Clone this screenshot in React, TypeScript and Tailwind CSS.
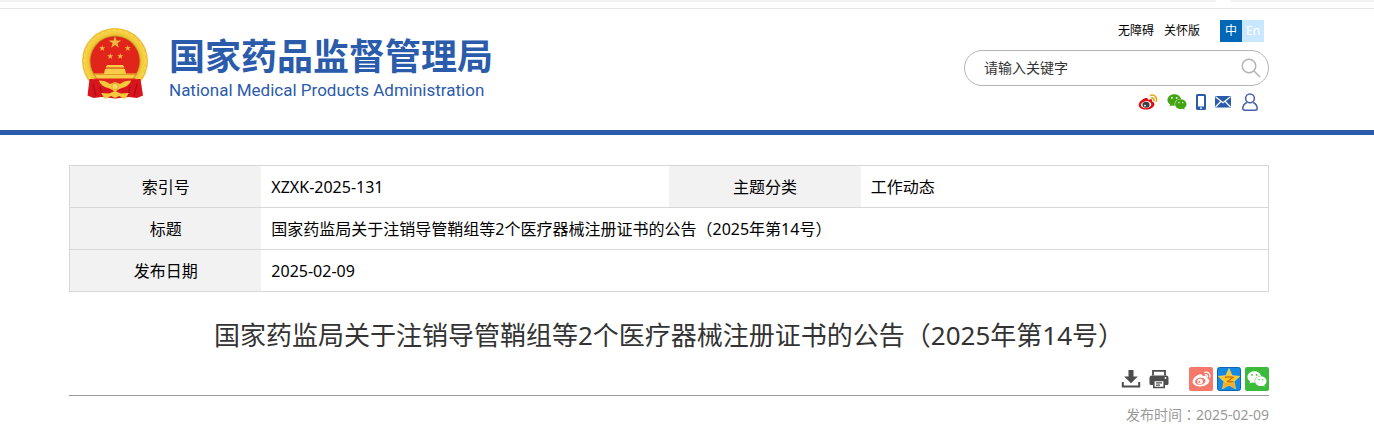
import { useState } from 'react';
import { FaWeixin } from 'react-icons/fa';

type Lang = 'zh' | 'en';

const TITLE = '国家药监局关于注销导管鞘组等2个医疗器械注册证书的公告（2025年第14号）';

const WEIBO_BODY =
    'M8.2 4.3c-2.2.2-5 2.2-6.6 4.5C-1.2 12.9 2.2 16.4 8 16.5c4.900 0 9.300-2.700 9.300-5.700 0-1.700-1.300-2.600-2.700-2.900.6-1.500.3-3.200-4.300-1.600.5-1.500-.3-2.200-2.100-2z';

const Emblem = () => (
    <svg viewBox="0 0 68 72" className="h-[72px] w-[68px] shrink-0" aria-hidden="true">
        <defs>
            <radialGradient id="gold" gradientUnits="userSpaceOnUse" cx="34" cy="33" r="33">
                <stop offset="74%" stopColor="#b98a1c" />
                <stop offset="79%" stopColor="#efc235" />
                <stop offset="90%" stopColor="#f7d345" />
                <stop offset="100%" stopColor="#eab92c" />
            </radialGradient>
            <symbol id="star" viewBox="-10 -10 20 20">
                <path d="M0-10 2.300-3.100H9.500L3.700 1.200 5.900 8.100 0 3.900-5.900 8.100-3.700 1.200-9.500-3.100H-2.300z" fill="#f0b840" />
            </symbol>
        </defs>
        <circle cx="34" cy="33" r="33" fill="url(#gold)" />
        <circle cx="34" cy="33" r="31" fill="none" stroke="#fbe06a" strokeWidth="1" strokeDasharray="3 3" />
        <circle cx="34" cy="33" r="24.500" fill="#e1251b" />
        <use href="#star" x="27.500" y="8" width="13" height="13" />
        <use href="#star" x="18" y="17" width="6.500" height="6.500" />
        <use href="#star" x="43.500" y="17" width="6.500" height="6.500" />
        <use href="#star" x="26" y="25" width="6.500" height="6.500" />
        <use href="#star" x="36" y="25" width="6.500" height="6.500" />
        <path d="M26 37h16l1.500 2.500h-19zM24 41h20l1 4.500h10c-1.500 3-3 5-5 7H18c-2-2-3.500-4-5-7h10z" fill="#f8cb48" />
        <path d="M25 40.200h18M13.500 46.500h41" stroke="#e09a26" strokeWidth="1" />
        <path d="M13 50.500h42c-4 5-9 8-21 8s-17-3-21-8z" fill="#e1251b" />
        <path d="M8.500 51c7 0 12 1 16.500 6l9 7 9-7c4.500-5 9.500-6 16.500-6l2.500 16.500-6 2.500-8-1-13.500 1.500L20.500 69l-8 1-6-2.500z" fill="#d8141c" />
        <path d="m12 56 3 12M19 58l2 9M56 56l-3 12M49 58l-2 9" stroke="#a50f14" strokeWidth="1.200" />
        <path d="M18 52.500c4 0 8 1 11 3.500l5-2 5 2c3-2.500 7-3.500 11-3.500-1 4-5 6.500-9 7.500l-4 1.500h-6L27 60c-4-1-8-3.500-9-7.500z" fill="#f5c93c" />
        <circle cx="34" cy="58.500" r="3.200" fill="#f9d95c" stroke="#e5a52c" />
        <path d="m20 65 8 .5 6-2.500 6 2.500 8-.5-4 6-6-3-4 2-4-2-6 3z" fill="#f5c93c" />
    </svg>
);

const HeaderWeibo = () => (
    <svg viewBox="0 0 21 17" className="h-4 w-5" aria-hidden="true">
        <path d={WEIBO_BODY} fill="#df0d12" />
        <ellipse cx="8.500" cy="11.300" rx="5.500" ry="3.700" fill="#fff" transform="rotate(-8 8.500 11.300)" />
        <ellipse cx="8.400" cy="11.500" rx="3.800" ry="3.200" fill="#3c4043" />
        <circle cx="7.300" cy="12.300" r="1" fill="#fff" />
        <path d="M13.500 1.300c4-1 7 2.500 5.800 6.200M14 4.200c2-.4 3.300 1 2.800 2.800" fill="none" stroke="#eaa50f" strokeWidth="1.700" strokeLinecap="round" />
    </svg>
);

const ShareWeibo = () => (
    <svg viewBox="0 0 24 24" className="size-6" aria-hidden="true">
        <rect width="24" height="24" rx="2" fill="#f5786a" />
        <g transform="translate(3 3)">
            <path d={WEIBO_BODY} fill="#fff" />
            <ellipse cx="8.300" cy="11.300" rx="5.300" ry="3.500" fill="#f5786a" transform="rotate(-8 8.300 11.300)" />
            <circle cx="8" cy="11.500" r="2.800" fill="#fff" />
            <circle cx="7.300" cy="12" r="1" fill="#f5786a" />
            <path d="M13 2.300c3.500-.8 5.800 2 4.800 5M13.300 4.800c1.600-.3 2.500.8 2.100 2.200" fill="none" stroke="#fff" strokeWidth="1.300" strokeLinecap="round" />
        </g>
    </svg>
);

const ShareQzone = () => (
    <svg viewBox="0 0 24 24" className="size-6" aria-hidden="true">
        <rect x=".5" y=".5" width="23" height="23" rx="2" fill="#1389e5" stroke="#0b65b5" />
        <path d="m12 1.500 3.100 7 7.700.8-5.700 5.200 1.600 7.500L12 18.200 5.300 22l1.600-7.500-5.700-5.200 7.700-.8z" fill="#fdc72b" stroke="#fbe169" strokeWidth=".5" />
        <path d="M7 15.500c3.500 1.300 7 1.300 10 .3l1.300 5.500L12 17.800l-6.300 3.500z" fill="#f9a81f" />
        <path d="M8 10.300c2.800-.6 5.300-.6 7.800 0l-5.200 4.200c2.200.4 4 .4 6 .1" fill="none" stroke="#c0740f" strokeWidth="1.400" />
    </svg>
);

const DownloadIcon = () => (
    <svg viewBox="0 0 20 20" className="size-5" aria-hidden="true">
        <path d="M7.500 1h5v6.500h4.300L10 14.300 3.200 7.500h4.300z" fill="#4d4d4d" />
        <path d="M1.800 13v4.500h16.400V13" fill="none" stroke="#4d4d4d" strokeWidth="2" />
    </svg>
);

const PrintIcon = () => (
    <svg viewBox="0 0 20 20" className="size-5" aria-hidden="true">
        <path d="M4 6.500V1.800h12v4.700" fill="none" stroke="#4d4d4d" strokeWidth="1.800" />
        <path d="M3 6.500h14A2.500 2.500 0 0 1 19.500 9v5.500A1.500 1.500 0 0 1 18 16H2a1.500 1.500 0 0 1-1.500-1.500V9A2.500 2.500 0 0 1 3 6.500z" fill="#4d4d4d" />
        <path d="M4.800 11.500h10.400v7H4.800z" fill="#fff" stroke="#4d4d4d" strokeWidth="1.600" />
        <path d="M7 13.800h6M7 16.200h4" stroke="#4d4d4d" strokeWidth="1.200" />
        <circle cx="16.500" cy="9" r=".9" fill="#fff" />
    </svg>
);

const SearchIcon = () => (
    <svg viewBox="0 0 20 20" className="size-5" fill="none" stroke="#b3b3b3" strokeWidth="1.500" aria-hidden="true">
        <circle cx="8" cy="8" r="6.800" />
        <path d="m13 13 6 6" />
    </svg>
);

const PhoneIcon = () => (
    <svg viewBox="0 0 10 16" className="h-4 w-[10px]" aria-hidden="true">
        <rect width="10" height="16" rx="1.500" fill="#2b5bab" />
        <path d="M2 2h6v10.500H2z" fill="#fff" />
        <circle cx="5" cy="14.200" r=".9" fill="#fff" />
    </svg>
);

const MailIcon = () => (
    <svg viewBox="0 0 16 12" className="h-3 w-4" aria-hidden="true">
        <rect width="16" height="11.500" rx=".5" fill="#2b5bab" />
        <path d="m.5.8 7.500 6 7.500-6M.5 11l5.300-5.500M15.500 11l-5.300-5.500" fill="none" stroke="#fff" strokeWidth="1.200" />
    </svg>
);

const UserIcon = () => (
    <svg viewBox="0 0 16 18" className="h-[18px] w-4" fill="none" stroke="#4460ae" strokeWidth="1.500" aria-hidden="true">
        <circle cx="8" cy="5.300" r="4.400" />
        <path d="M4.800 9.500C2.300 10.800.8 13 .8 15.300c0 1.400.6 1.900 2 1.900h10.400c1.400 0 2-.5 2-1.900 0-2.300-1.500-4.500-4-5.800" />
    </svg>
);

const SiteHeader = () => {
    const [lang, setLang] = useState<Lang>('zh');
    const [keyword, setKeyword] = useState('');

    const langClass = (active: boolean) =>
        active ? 'size-[22px] bg-[#0068b7] text-white' : 'size-[22px] bg-[#c9e7ff] text-white';

    return (
        <header className="border-b-5 border-[#2b5bab] pr-9">
            <div className="mx-auto flex max-w-[1200px] items-start justify-between pt-[11px] pb-[19px]">
                <a href="#" className="flex items-start gap-5 pt-2 pl-3 text-[#2b5bab]">
                    <Emblem />
                    <div className="pt-2">
                        <div className="text-4xl leading-[42px] font-bold">国家药品监督管理局</div>
                        <div className="font-['Roboto',sans-serif] text-[17px] leading-6">
                            National Medical Products Administration
                        </div>
                    </div>
                </a>

                <div className="flex w-[305px] flex-col">
                    <div className="flex h-[22px] items-center justify-end pr-[5px] text-xs">
                        <a href="#" className="mr-[10px]">无障碍</a>
                        <a href="#" className="mr-5">关怀版</a>
                        <button className={langClass(lang === 'zh')} onClick={() => setLang('zh')}>中</button>
                        <button className={langClass(lang === 'en')} onClick={() => setLang('en')}>En</button>
                    </div>
                    <form
                        onSubmit={(e) => e.preventDefault()}
                        className="mt-2 flex h-9 items-center rounded-full border border-[#b4b4b4] pr-[7px] pl-[19px]"
                    >
                        <input
                            type="text"
                            aria-label="请输入关键字"
                            placeholder="请输入关键字"
                            value={keyword}
                            onChange={(e) => setKeyword(e.target.value)}
                            className="min-w-0 flex-1 text-sm outline-none placeholder:text-[#333]"
                        />
                        <button type="submit" aria-label="搜索"><SearchIcon /></button>
                    </form>
                    <div className="mt-[7px] flex h-[18px] items-center justify-end gap-[9px] pr-[11px]">
                        <a href="#" aria-label="微博"><HeaderWeibo /></a>
                        <a href="#" aria-label="微信" className="text-[#43a513]"><FaWeixin size={20} /></a>
                        <a href="#" aria-label="手机版"><PhoneIcon /></a>
                        <a href="#" aria-label="邮箱"><MailIcon /></a>
                        <a href="#" aria-label="个人中心" className="ml-[2px]"><UserIcon /></a>
                    </div>
                </div>
            </div>
        </header>
    );
};

const InfoTable = () => {
    const th = 'w-[16%] bg-[#f2f2f2] font-normal';
    const td = 'px-[10px]';
    const tr = 'h-[42px] border-y border-[#d7d7d7]';

    return (
        <table className="w-full table-fixed border-collapse border border-[#d7d7d7] text-base leading-6">
            <tbody>
                <tr className={tr}>
                    <th className={th}>索引号</th>
                    <td className={td}>XZXK-2025-131</td>
                    <th className={th}>主题分类</th>
                    <td className={td}>工作动态</td>
                </tr>
                <tr className={tr}>
                    <th className={th}>标题</th>
                    <td className={td} colSpan={3}>{TITLE}</td>
                </tr>
                <tr className={tr}>
                    <th className={th}>发布日期</th>
                    <td className={td} colSpan={3}>2025-02-09</td>
                </tr>
            </tbody>
        </table>
    );
};

const App = () => (
    <div lang="zh-CN" className="bg-white font-['Noto_Sans','Noto_Sans_CJK_SC',sans-serif] text-black">
        <div className="flex h-[9px] items-start gap-[14px] border-b border-[#e5e5e5]">
            <div className="h-[2px] flex-1 rounded-br bg-[#f2f2f2]" />
            <div className="h-[2px] w-36 rounded-bl bg-[#f2f2f2]" />
        </div>

        <SiteHeader />

        <main className="pr-9">
            <div className="mx-auto max-w-[1200px] pt-[30px]">
                <InfoTable />
                <h1 className="mt-[23px] text-center text-[26px] leading-10 text-[#333]">{TITLE}</h1>
                <div className="mt-3 flex items-center justify-end gap-1 border-b border-[#999] pb-1">
                    <button aria-label="下载" className="mr-1"><DownloadIcon /></button>
                    <button aria-label="打印" className="mr-4"><PrintIcon /></button>
                    <a href="#" aria-label="分享到微博"><ShareWeibo /></a>
                    <a href="#" aria-label="分享到QQ空间"><ShareQzone /></a>
                    <a
                        href="#"
                        aria-label="分享到微信"
                        className="flex size-6 items-center justify-center rounded-xs bg-[#3cba3c] text-white"
                    >
                        <FaWeixin size={20} />
                    </a>
                </div>
                <p className="mt-2 text-right text-sm leading-5 text-[#999]">
                    发布时间<span className="font-['Noto_Sans_CJK_TC',sans-serif]" lang="zh-TW">：</span>2025-02-09
                </p>
            </div>
        </main>
    </div>
);

export default App;
